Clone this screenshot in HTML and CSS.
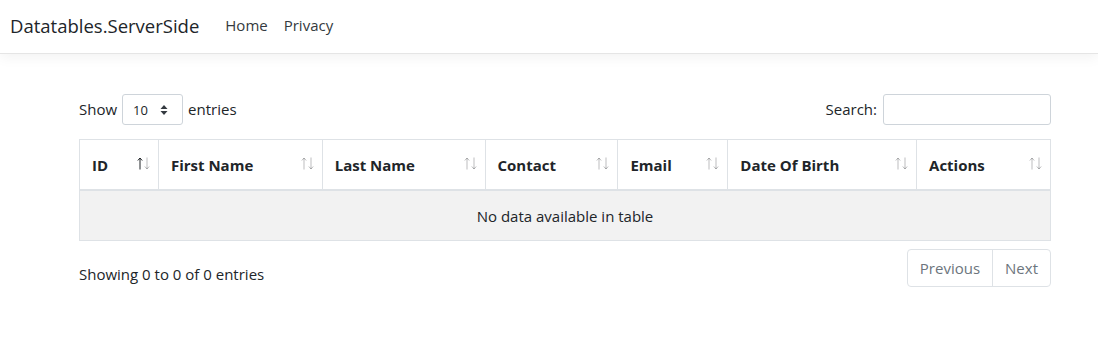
FILE: index.html
```html
<!DOCTYPE html>
<html>
<head>
<meta charset="utf-8">
<link rel="stylesheet" href="styles.css">
</head>
<body>
<header class="navbar">
  <a class="brand">Datatables.ServerSide</a>
  <nav class="nav">
    <a class="nav-link">Home</a>
    <a class="nav-link">Privacy</a>
  </nav>
</header>
<main class="main">
  <div class="controls">
    <div class="length">
      <span>Show</span>
      <div class="select"><span>10</span>
        <svg width="8" height="10" viewBox="0 0 8 10"><path d="M4 0 L7.5 4 H0.5 Z M4 10 L0.5 6 H7.5 Z" fill="#343a40"/></svg>
      </div>
      <span>entries</span>
    </div>
    <div class="search">
      <span>Search:</span>
      <div class="input"></div>
    </div>
  </div>
  <table class="table">
    <thead>
      <tr>
        <th class="c1"><div class="th"><span>ID</span><svg class="sort asc" width="13" height="13" viewBox="0 0 13 13"><path class="up" d="M3 12.5V1 M0.8 3.5L3 1L5.2 3.5"/><path class="down" d="M10 0.5V12 M7.8 9.5L10 12L12.2 9.5"/></svg></div></th>
        <th class="c2"><div class="th"><span>First Name</span><svg class="sort" width="13" height="13" viewBox="0 0 13 13"><path class="up" d="M3 12.5V1 M0.8 3.5L3 1L5.2 3.5"/><path class="down" d="M10 0.5V12 M7.8 9.5L10 12L12.2 9.5"/></svg></div></th>
        <th class="c3"><div class="th"><span>Last Name</span><svg class="sort" width="13" height="13" viewBox="0 0 13 13"><path class="up" d="M3 12.5V1 M0.8 3.5L3 1L5.2 3.5"/><path class="down" d="M10 0.5V12 M7.8 9.5L10 12L12.2 9.5"/></svg></div></th>
        <th class="c4"><div class="th"><span>Contact</span><svg class="sort" width="13" height="13" viewBox="0 0 13 13"><path class="up" d="M3 12.5V1 M0.8 3.5L3 1L5.2 3.5"/><path class="down" d="M10 0.5V12 M7.8 9.5L10 12L12.2 9.5"/></svg></div></th>
        <th class="c5"><div class="th"><span>Email</span><svg class="sort" width="13" height="13" viewBox="0 0 13 13"><path class="up" d="M3 12.5V1 M0.8 3.5L3 1L5.2 3.5"/><path class="down" d="M10 0.5V12 M7.8 9.5L10 12L12.2 9.5"/></svg></div></th>
        <th class="c6"><div class="th"><span>Date Of Birth</span><svg class="sort" width="13" height="13" viewBox="0 0 13 13"><path class="up" d="M3 12.5V1 M0.8 3.5L3 1L5.2 3.5"/><path class="down" d="M10 0.5V12 M7.8 9.5L10 12L12.2 9.5"/></svg></div></th>
        <th class="c7"><div class="th"><span>Actions</span><svg class="sort" width="13" height="13" viewBox="0 0 13 13"><path class="up" d="M3 12.5V1 M0.8 3.5L3 1L5.2 3.5"/><path class="down" d="M10 0.5V12 M7.8 9.5L10 12L12.2 9.5"/></svg></div></th>
      </tr>
    </thead>
    <tbody>
      <tr><td colspan="7" class="empty">No data available in table</td></tr>
    </tbody>
  </table>
  <div class="footer">
    <div class="info">Showing 0 to 0 of 0 entries</div>
    <div class="pagination">
      <span class="page">Previous</span>
      <span class="page">Next</span>
    </div>
  </div>
</main>
</body>
</html>
```
FILE: styles.css
```css
* { box-sizing: border-box; }
html, body { margin: 0; padding: 0; }
body {
  font-family: "Open Sans", "Noto Sans", sans-serif;
  font-size: 15px;
  color: #212529;
  background: #fff;
  width: 1098px;
  height: 338px;
  overflow: hidden;
}
.navbar {
  height: 54px;
  display: flex;
  align-items: center;
  padding: 0 10px;
  border-bottom: 1px solid #e5e5e5;
  box-shadow: 0 4px 12px rgba(0,0,0,0.05);
}
.brand {
  font-size: 18.5px;
  color: #212529;
  margin-right: 18px;
  margin-top: -3px;
}
.nav { display: flex; margin-top: -3px; }
.nav-link {
  color: #343a40;
  font-size: 15px;
  padding: 0 8px;
}
.main {
  padding: 40px 47px 0 79px;
}
.controls {
  display: flex;
  justify-content: space-between;
  align-items: center;
  height: 31px;
}
.length, .search {
  display: flex;
  align-items: center;
  gap: 6px;
}
.length span, .search span { margin-top: -2px; }
.select {
  width: 61px;
  height: 31px;
  border: 1px solid #ced4da;
  border-radius: 3px;
  display: flex;
  align-items: center;
  justify-content: space-between;
  padding: 0 14px 0 10px;
  font-size: 13px;
  margin: 0 -1px 0 -1px;
}
.select span { margin-top: 0 !important; }
.input {
  width: 168px;
  height: 31px;
  border: 1px solid #ced4da;
  border-radius: 3px;
}
.table {
  margin-top: 14px;
  width: 972px;
  border-collapse: collapse;
  border: 1px solid #dee2e6;
}
.table th {
  border: 1px solid #dee2e6;
  border-bottom: 2px solid #dee2e6;
  padding: 13px 8px 12px 12px;
  font-weight: 700;
  text-align: left;
  line-height: 24px;
  font-size: 15px;
}
.th { display: flex; justify-content: space-between; align-items: center; }
.c1 { width: 79px; }
.c2 { width: 164px; }
.c3 { width: 163px; }
.c4 { width: 133px; }
.c5 { width: 110px; }
.c6 { width: 189px; }
.c7 { width: 134px; }
.sort {
  margin-top: -4px;
  fill: none;
  stroke-width: 1;
}
.sort path { stroke: #212529; stroke-opacity: 0.3; }
.sort.asc .up { stroke-opacity: 1; }
.table td {
  border: 1px solid #dee2e6;
  padding: 13px 12px 12px;
  line-height: 24px;
}
.empty {
  background: #f2f2f2;
  text-align: center;
}
.footer {
  display: flex;
  justify-content: space-between;
  align-items: center;
  margin-top: 8px;
  width: 972px;
}
.info { padding-top: 11px; }
.pagination {
  display: flex;
  border: 1px solid #dee2e6;
  border-radius: 4px;
  height: 38px;
}
.page {
  color: #6c757d;
  padding: 0 12px;
  display: flex;
  align-items: center;
}
.page + .page { border-left: 1px solid #dee2e6; }
```
